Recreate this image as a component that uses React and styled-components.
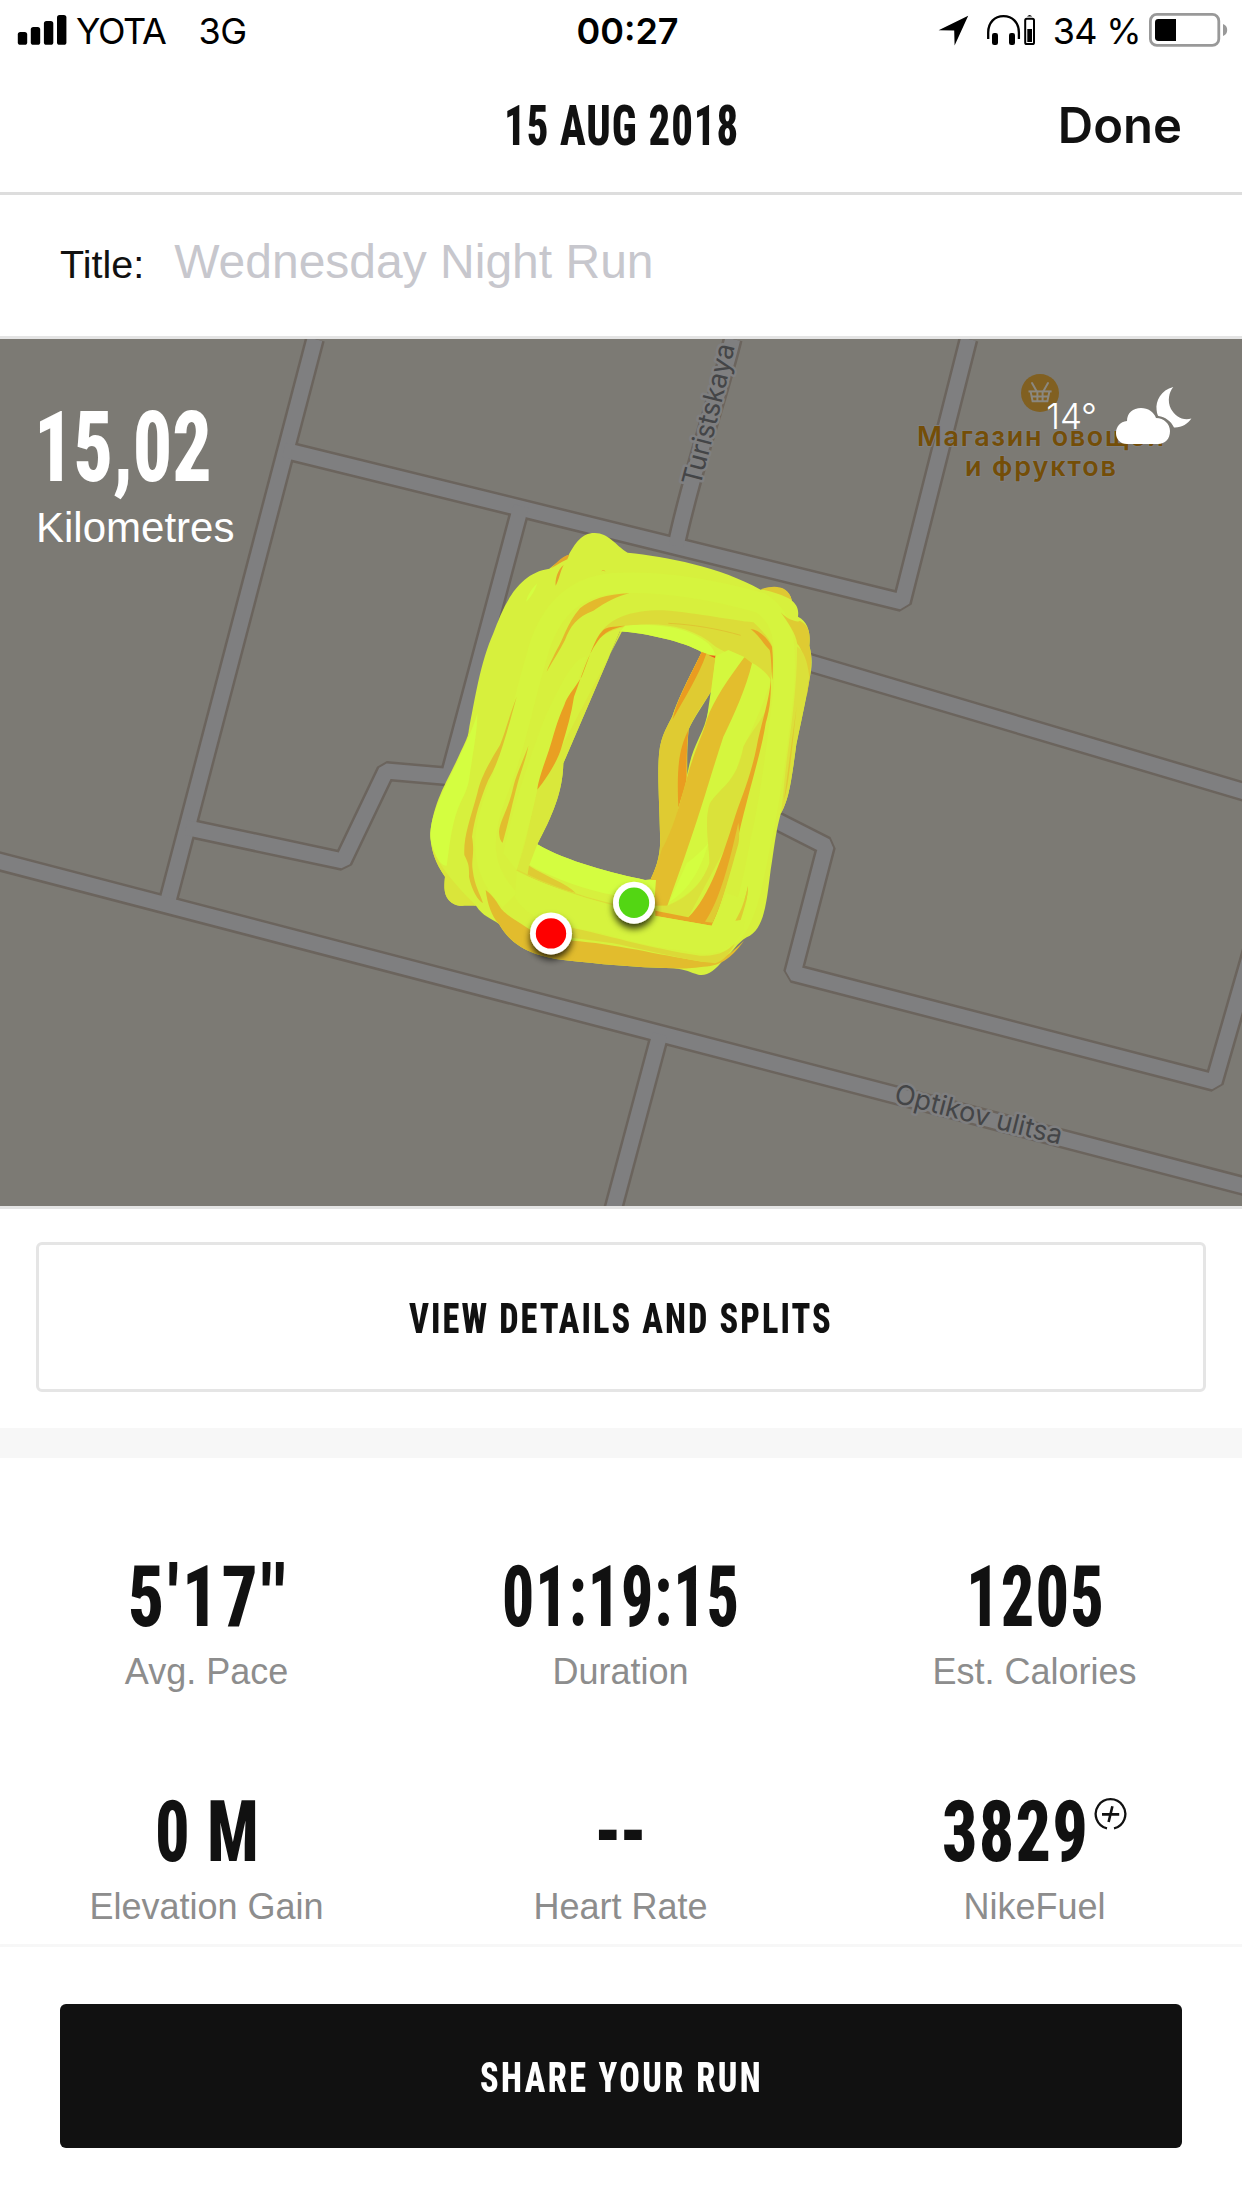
import React, { useLayoutEffect, useRef, useState } from "react";
import styled, { createGlobalStyle } from "styled-components";

const GlobalStyle = createGlobalStyle`
  *, *::before, *::after { box-sizing: border-box; }
  body {
    margin: 0;
    background: #fff;
    color: #111;
    font-family: "Liberation Sans", Arial, sans-serif;
  }
`;

const system = `Inter, "Open Sans", sans-serif`;

const Screen = styled.main`
  width: 1242px;
  height: 2208px;
  display: flex;
  flex-direction: column;
  background: #fff;
  overflow: hidden;
`;

/* ---------- condensed headline text ---------- */

const CondensedBox = styled.span`
  display: inline-flex;
  flex: none;
  justify-content: flex-start;
  width: ${(p) => p.$width}px;
  height: ${(p) => p.$line}px;
  line-height: ${(p) => p.$line}px;
`;

const CondensedInner = styled.span`
  flex: none;
  white-space: pre;
  transform-origin: 0 50%;
  font-family: Roboto, "Open Sans", sans-serif;
  font-stretch: 75%;
  font-weight: ${(p) => p.$weight};
  font-size: ${(p) => p.$size}px;
  letter-spacing: ${(p) => p.$spacing}px;
  margin-right: ${(p) => -p.$spacing}px;
`;

function Condensed({ children, width, size, line, weight = 800, spacing = 0 }) {
  const ref = useRef(null);
  const [scale, setScale] = useState(0.8);
  useLayoutEffect(() => {
    setScale(width / (ref.current.offsetWidth - spacing));
  }, [width, spacing, children]);
  return (
    <CondensedBox $width={width} $line={line}>
      <CondensedInner
        ref={ref}
        $size={size}
        $weight={weight}
        $spacing={spacing}
        style={{ transform: `scaleX(${scale})` }}
      >
        {children}
      </CondensedInner>
    </CondensedBox>
  );
}

/* ---------- status bar ---------- */

const StatusBar = styled.header`
  flex: none;
  height: 62px;
  display: grid;
  grid-template-columns: 1fr auto 1fr;
  padding: 0 14px 0 17px;
  font: 400 36px/62px ${system};
  color: #000;
`;

const StatusSide = styled.div`
  display: flex;
  align-items: flex-start;
  justify-content: ${(p) => (p.$end ? "flex-end" : "flex-start")};
`;

const StatusText = styled.span`
  white-space: pre;
  margin-left: ${(p) => p.$before || 0}px;
  letter-spacing: ${(p) => p.$spacing || 0}px;
`;

const Clock = styled.time`
  font-weight: 600;
  margin-left: 10px;
`;

const StatusIcon = styled.svg`
  display: block;
  flex: none;
  height: 62px;
  width: ${(p) => p.$width}px;
  margin-left: ${(p) => p.$before || 0}px;
`;

const SignalIcon = () => (
  <StatusIcon $width={50} viewBox="17 0 50 62">
    <rect x="17.8" y="32" width="9.4" height="12.8" rx="2.6" />
    <rect x="30.8" y="27" width="9.4" height="17.8" rx="2.6" />
    <rect x="43.9" y="21" width="9.4" height="23.8" rx="2.6" />
    <rect x="57" y="15" width="9.4" height="29.8" rx="2.6" />
  </StatusIcon>
);

const LocationIcon = () => (
  <StatusIcon $width={31} viewBox="939 0 31 62">
    <path d="M939.6 30.2 969.2 15.8 955.6 45.6 955.2 30.6Z" />
  </StatusIcon>
);

const HeadphonesIcon = () => (
  <StatusIcon $width={50} $before={17} viewBox="986 0 50 62">
    <path
      d="M988.2 39V32.5C988.2 22.5 994.5 16.2 1003.5 16.2S1018.9 22.5 1018.9 32.5V39"
      fill="none"
      stroke="#000"
      strokeWidth="2.3"
    />
    <rect x="992" y="33" width="6" height="12" rx="2.2" />
    <rect x="1009" y="33" width="6" height="12" rx="2.2" />
    <rect x="1025.2" y="18.8" width="8.8" height="25.2" rx="1.6" fill="none" stroke="#000" strokeWidth="2" />
    <rect x="1027.3" y="29" width="4.7" height="13" />
    <path d="M1027 16.6Q1029.6 13.6 1032.2 16.6Z" />
  </StatusIcon>
);

const BatteryIcon = () => (
  <StatusIcon $width={79} $before={8} viewBox="1149 0 79 62">
    <rect x="1150.4" y="14.4" width="68.4" height="31" rx="6.5" fill="none" stroke="#999" strokeWidth="2.8" />
    <path d="M1176 19V41H1158.4Q1155 41 1155 37.6V22.4Q1155 19 1158.4 19Z" />
    <path d="M1223 24Q1227.2 25.5 1227.2 30T1223 36Z" fill="#999" />
  </StatusIcon>
);

/* ---------- navigation + title ---------- */

const NavBar = styled.nav`
  flex: none;
  height: 133px;
  display: grid;
  grid-template-columns: 1fr auto 1fr;
  align-items: start;
  padding: 34px 60px 0;
  border-bottom: 3px solid #ddd;
`;

const DoneButton = styled.button`
  grid-column: 3;
  justify-self: end;
  padding: 0;
  border: 0;
  background: none;
  color: #111;
  font: 600 49px/60px ${system};
`;

const NavTitle = styled.h1`
  grid-column: 2;
  margin: 0;
  display: flex;
`;

const TitleRow = styled.label`
  flex: none;
  height: 144px;
  display: flex;
  align-items: baseline;
  gap: 30px;
  padding: 39px 60px 0;
  border-bottom: 3px solid #e4e4e4;
`;

const TitleLabel = styled.span`
  font-size: 39.5px;
  line-height: 56px;
`;

const TitleValue = styled.span`
  font-size: 48px;
  line-height: 56px;
  color: #c7c7cd;
`;

/* ---------- map ---------- */

const MapPanel = styled.section`
  flex: none;
  position: relative;
  height: 870px;
  border-bottom: 3px solid #e4e4e4;
  background: #7c7a74;
`;

const MapCanvas = styled.svg`
  position: absolute;
  inset: 0;
  width: 1242px;
  height: 867px;
  font-family: ${system};
`;

const MapOverlay = styled.div`
  position: relative;
  display: flex;
  justify-content: space-between;
  align-items: flex-start;
  padding: 48px 50px 0 34px;
  color: #fff;
`;

const Distance = styled.div`
  display: flex;
  flex-direction: column;
  gap: 6px;
  padding-top: 10px;
`;

const Unit = styled.span`
  font-size: 42px;
  line-height: 50px;
  padding-left: 2px;
`;

const Weather = styled.div`
  display: flex;
  align-items: center;
  gap: 18px;
  font: 350 35px/40px ${system};
`;

const WeatherIcon = styled.svg`
  display: block;
  width: 77px;
  height: 57px;
`;

const roads = [
  "M315 339 166 908",
  "M284 450 902 602 968.5 339",
  "M732.7 339C722 385 692 470 676 546",
  "M521 506 449 776.5 386 771 343 861 186 827.5",
  "M-8 859.5 621 1023.5 1250 1187.5",
  "M660 1034 609 1225",
  "M780 654 1260 796.5",
  "M765 815 826 846 793 973 1214 1082 1252 950",
];

const Roads = () => (
  <g fill="none" strokeLinejoin="bevel">
    {roads.map((d) => (
      <path key={d} d={d} stroke="#6b645d" strokeWidth="20" />
    ))}
    {roads.map((d) => (
      <path key={d} d={d} stroke="#7f7f80" strokeWidth="15" />
    ))}
  </g>
);

const Shop = () => (
  <g>
    <circle cx="1040" cy="393" r="19" fill="#816021" />
    <g fill="none" stroke="#8b8880" strokeWidth="2">
      <path d="M1032 383 1036.5 391M1048 383 1043.5 391" strokeLinecap="round" />
      <path d="M1028.5 391.4H1051.6" />
      <path d="M1030.6 391.4 1032.6 401.2H1047.4L1049.4 391.4M1032 396.4H1048.4M1037.4 391.4V401M1042.6 391.4V401" />
    </g>
    <g
      fill="#744e08"
      stroke="#7f7f80"
      strokeWidth="2"
      paintOrder="stroke"
      fontWeight="600"
      fontSize="27"
      textAnchor="middle"
    >
      <text x="1040.5" y="446" textLength="247">Магазин овощей</text>
      <text x="1040.5" y="476" textLength="151">и фруктов</text>
    </g>
  </g>
);

const StreetNames = () => (
  <g fill="#444547" stroke="#7f7f80" strokeWidth="5" strokeLinejoin="round" paintOrder="stroke" fontSize="27">
    <path id="tur" d="M700 487C711 445 726 388 740 322" fill="none" stroke="none" />
    <path id="opt" d="M893 1102C950 1117 1010 1133 1070 1147" fill="none" stroke="none" />
    <text>
      <textPath href="#tur">Turistskaya</textPath>
    </text>
    <text>
      <textPath href="#opt">Optikov ulitsa</textPath>
    </text>
  </g>
);

const Route = () => (
  <g transform="translate(400 500) scale(0.33333)">
    <path
      fill="#d7f03d"
      fillRule="evenodd"
      d="M583 99C625 98 645 135 683 158C800 170 960 200 1082 269C1120 258 1165 256 1176 302C1195 318 1196 335 1194 350C1225 365 1232 400 1228 437C1240 480 1234 510 1230 530C1215 620 1195 700 1188 740C1172 860 1165 900 1142 942C1126 1000 1122 1050 1112 1110C1100 1200 1095 1290 1040 1312C1010 1330 1000 1355 970 1380C945 1412 920 1430 895 1424C870 1418 860 1408 820 1405C700 1402 600 1392 490 1380C420 1370 340 1350 297 1272C270 1252 250 1250 228 1217C190 1215 175 1222 155 1208C130 1190 132 1160 135 1130C105 1090 90 1040 91 1000C100 900 150 830 180 760C210 700 203 705 210 670C225 600 240 490 280 400C310 320 350 220 448 206C470 190 490 170 506 165C525 130 545 99 583 99Z
      M660 394L490 790C488 880 455 950 412 1033C500 1085 640 1120 735 1140L752 1138C780 1080 782 1040 780 1000C778 900 770 800 780 740C790 690 815 660 820 640C845 570 890 490 905 456C850 425 740 400 660 394Z
      M933 573C920 600 880 655 866 688C860 750 862 800 862 825C875 740 905 710 918 660C930 620 934 600 933 573Z"
    />
    <path fill="#d4fe40" d="M232 640C215 700 190 740 170 790C120 890 91 950 91 1010C95 1050 120 1100 140 1097C150 1030 155 960 185 900C212 850 208 820 213 800C222 740 232 690 232 640Z" />
    <path fill="#dae53a" d="M94 1030C105 1080 150 1140 228 1217C190 1215 175 1222 155 1208C130 1190 132 1160 135 1130C115 1100 100 1075 94 1030Z" />
    <path fill="#d4fd40" d="M412 250C395 265 380 290 379 305C395 290 405 270 412 250Z" />
    <path
      fill="none"
      stroke="#d6f43e"
      strokeWidth="62"
      d="M330 1200C240 1110 240 1010 290 880C350 730 370 600 410 470C440 350 510 260 640 250C800 240 960 275 1080 308C1150 350 1160 420 1152 560C1130 760 1110 900 1085 1010C1060 1130 1040 1300 960 1325C820 1330 680 1290 540 1250"
    />
    <path fill="#d9e83b" d="M675 377L660 394 490 790C488 880 455 950 412 1033L383 1130 350 1110C390 1000 395 920 412 869C440 835 475 780 485 740Z" />
    <path fill="#d6f33e" d="M412 868C400 930 375 1020 350 1110L310 1060C330 960 370 820 440 640C480 560 520 470 560 470Z" />
    <path fill="#dcdc38" d="M585 430C615 350 700 330 790 331C900 340 1000 362 1060 367C1090 395 1112 420 1117 440L1112 540C1080 505 1000 470 947 440C890 390 820 372 740 373C690 375 620 385 585 430Z" />
    <path fill="#d4fd40" d="M660 394L675 377C740 370 820 378 870 398C920 420 942 440 947 470L905 456C850 425 740 400 660 394Z" />
    <path fill="none" stroke="#dfc030" strokeWidth="2.5" d="M805 370C880 373 960 388 1022 406" />
    <path fill="#e8a626" d="M1052 387C1080 390 1105 418 1116 440C1120 475 1119 500 1117 540C1113 510 1115 475 1109 450C1090 430 1075 405 1052 387Z" />
    <path fill="#e0c030" d="M350 590C330 640 315 700 300 735C260 800 240 840 232 880C210 960 190 1010 193 1065C205 1090 208 1095 207 1130C215 1170 235 1203 249 1209C240 1180 224 1160 218 1110C213 1080 225 1060 216 1010C225 950 240 900 265 840C300 780 320 700 350 590Z" />
    <path fill="#e4b92c" d="M688 280C620 282 570 300 540 325C500 370 490 420 470 450C455 480 445 500 440 515C460 480 480 450 495 420C510 380 530 350 580 332C620 305 650 290 688 280Z" />
    <path fill="#e2bd2d" d="M385 738C370 780 350 820 340 860C325 930 300 960 297 995C298 1015 303 1025 308 1028C322 980 335 920 353 850C367 800 380 770 385 738Z" />
    <path fill="#e99f22" d="M675 377C640 380 620 380 610 390C580 420 570 470 545 530C520 570 500 590 493 615C470 665 460 710 447 750C430 800 415 840 412 869C440 835 475 780 485 740C500 690 515 640 522 590C545 530 560 470 592 425C612 395 640 385 675 377Z" />
    <path fill="#e5a52a" d="M452 205C475 183 490 166 508 164L502 178C485 186 470 196 452 205ZM491 195C472 210 465 240 467 257C479 235 480 215 491 195ZM604 214Q610 207 617 215Q610 210 604 214Z" />
    <path fill="#dfcb32" d="M1142 337C1165 362 1195 368 1200 362C1228 375 1232 405 1228 437C1240 480 1230 530 1220 590C1222 520 1212 450 1192 432C1187 400 1165 370 1142 337Z" />
    <path fill="#dbe03a" d="M1191 440C1193 560 1168 720 1158 800C1150 870 1146 930 1142 942C1165 900 1172 860 1188 740C1195 700 1215 620 1228 530C1222 480 1210 450 1191 440Z" />
    <path fill="#dfc832" d="M1190 620C1175 720 1165 810 1152 900C1168 850 1178 720 1190 620ZM1082 268C1120 255 1165 255 1175 300C1150 286 1120 276 1082 268Z" />
    <path fill="#dfcb32" d="M905 456L947 470 935 573C900 625 880 655 866 688C850 750 836 800 835 850L835 920 800 1217H762L752 1138C780 1080 782 1040 780 1000C778 900 770 800 780 740C790 690 815 660 820 640C845 570 890 490 905 456Z" />
    <path fill="#ea9c20" d="M905 456C870 530 830 600 818 658C850 600 895 530 919 461ZM866 688C836 750 830 800 835 924C845 890 860 850 860 830C860 780 860 740 866 688Z" />
    <path fill="#ee5a1c" d="M926 466L947 467 945 474Z" />
    <path fill="#d4f83e" d="M947 468L985 450 1035 472C990 540 940 610 920 660C926 620 930 590 933 573Z" />
    <path fill="#d5f63e" d="M1055 488C1040 560 1000 650 970 710C930 830 900 950 800 1217C850 1195 905 1160 928 1090C930 1050 910 960 930 910C960 865 1005 850 1012 800C1030 730 1080 650 1113 540C1100 520 1080 500 1055 488Z" />
    <path fill="#d4fe40" d="M925 1030C905 1100 870 1170 808 1206L860 1090Q900 1060 925 1030Z" />
    <path fill="#e3be2d" d="M1033 472L1056 490C1040 560 1000 650 970 710C930 830 900 950 802 1217H768L752 1138C780 1080 785 1040 790 1040C830 960 835 920 862 830C880 760 910 700 920 660C940 600 990 530 1033 472Z" />
    <path fill="#dae23a" d="M1030 740C1010 850 960 860 930 910C910 960 930 1050 928 1090C905 1160 850 1200 802 1217H768L760 1235 865 1252C930 1130 1000 1000 1020 960C1050 820 1100 680 1112 600C1095 650 1050 700 1030 740Z" />
    <path fill="#e8a626" d="M1113 530C1110 600 1080 680 1070 740C1050 840 1020 900 1002 960C970 1060 930 1190 865 1252L766 1232V1248L935 1277C980 1180 1000 1060 1017 1000C1050 860 1085 750 1097 670C1112 620 1113 580 1113 530Z" />
    <path fill="#dfcb32" d="M1015 968C1019 1000 1018 1020 1015 1032C990 1120 970 1200 938 1268L915 1265C960 1200 990 1080 1015 968ZM1044 1158C1035 1200 1025 1230 1006 1262L1022 1260C1035 1220 1044 1190 1044 1158Z" />
    <path fill="#d4fd40" d="M412 1033C500 1085 640 1120 735 1140H768L762 1217 640 1185C560 1170 470 1140 388 1095Z" />
    <path fill="#dfcb32" d="M387 1097C440 1130 500 1150 527 1179C470 1165 420 1145 382 1127Z" />
    <path fill="none" stroke="#dbdd38" strokeWidth="4" d="M350 1110C430 1150 540 1190 640 1214" />
    <path fill="#d6f33e" d="M350 1114C430 1155 540 1190 640 1218L765 1247 935 1277 980 1180 1040 1200 1030 1290C980 1370 920 1370 850 1352L520 1282C430 1275 360 1230 345 1190Z" />
    <path fill="#dfcb32" d="M1044 1158C1035 1200 1025 1230 1006 1262L1022 1260C1035 1220 1044 1190 1044 1158Z" />
    <path fill="#e2bc2d" d="M257 1170C285 1190 300 1225 307 1230C330 1255 380 1280 400 1296L515 1322C640 1330 780 1365 890 1382C950 1395 990 1365 1032 1322C1000 1365 970 1398 910 1400C850 1408 820 1405 820 1405C700 1402 600 1392 490 1380C420 1370 340 1350 297 1272C275 1250 262 1210 257 1170Z" />
    <path fill="#dcd937" d="M515 1283C600 1300 750 1345 900 1367C960 1370 985 1350 1005 1330C990 1360 970 1385 945 1390C880 1385 780 1360 640 1330L515 1313Z" />
  </g>
);

const Marker = ({ x, y, color }) => (
  <g>
    <circle cx={x} cy={y} r="21" fill="#fff" filter="url(#pinShadow)" />
    <circle cx={x} cy={y} r="15.2" fill={color} />
  </g>
);

const RunMap = () => (
  <MapCanvas viewBox="0 339 1242 867">
    <defs>
      <filter id="pinShadow" x="-50%" y="-50%" width="200%" height="200%">
        <feDropShadow dx="0" dy="5" stdDeviation="3.5" floodColor="#000" floodOpacity="0.75" />
      </filter>
    </defs>
    <Roads />
    <StreetNames />
    <Shop />
    <Route />
    <Marker x={634} y={902.7} color="#53d613" />
    <Marker x={551} y={933.4} color="#fe0000" />
  </MapCanvas>
);

/* ---------- details ---------- */

const DetailsSection = styled.section`
  flex: none;
  padding: 33px 36px 36px;
  border-bottom: 30px solid #f7f7f7;
`;

const OutlineButton = styled.button`
  width: 100%;
  height: 150px;
  display: flex;
  align-items: center;
  justify-content: center;
  padding: 1px 3px 0 0;
  border: 3px solid #e5e5e5;
  border-radius: 6px;
  background: #fff;
  color: #111;
`;

const Stats = styled.section`
  flex: none;
  height: 489px;
  display: grid;
  grid-template-columns: repeat(3, 1fr);
  align-content: start;
  row-gap: 95px;
  padding-top: 96px;
  border-bottom: 3px solid #f7f7f7;
`;

const Stat = styled.div`
  display: flex;
  flex-direction: column;
  align-items: center;
  gap: 10px;
`;

const StatValue = styled.div`
  display: flex;
  align-items: flex-start;
  gap: 5px;
  padding-right: 1px;
`;

const StatLabel = styled.div`
  font-size: 36px;
  line-height: 44px;
  padding-right: 1px;
  color: #8d8d8d;
`;

const FuelIcon = styled.svg`
  display: block;
  width: 34px;
  height: 34px;
  margin-top: 8px;
`;

const stats = [
  { label: "Avg. Pace", value: "5'17''", width: 157, spacing: 4 },
  { label: "Duration", value: "01:19:15", width: 237, spacing: 1.5 },
  { label: "Est. Calories", value: "1205", width: 138, spacing: 1.5 },
  { label: "Elevation Gain", value: "0 M", width: 104, spacing: 1 },
  { label: "Heart Rate", value: "--", width: 53, spacing: -3 },
  { label: "NikeFuel", value: "3829", width: 146, spacing: 1.5, fuel: true },
];

const Footer = styled.footer`
  padding: 57px 60px 0;
`;

const ShareButton = styled.button`
  width: 100%;
  height: 144px;
  display: flex;
  align-items: center;
  justify-content: center;
  padding: 1px 2px 0 0;
  border: 0;
  border-radius: 6px;
  background: #111;
  color: #fff;
`;

export default function App() {
  return (
    <Screen>
      <GlobalStyle />
      <StatusBar>
        <StatusSide>
          <SignalIcon />
          <StatusText $before={9} $spacing={-1.3}>YOTA</StatusText>
          <StatusText $before={33} $spacing={-0.5}>3G</StatusText>
        </StatusSide>
        <Clock>00:27</Clock>
        <StatusSide $end>
          <LocationIcon />
          <HeadphonesIcon />
          <StatusText $before={17} $spacing={-0.7}>34 %</StatusText>
          <BatteryIcon />
        </StatusSide>
      </StatusBar>

      <NavBar>
        <NavTitle>
          <Condensed width={234} size={56} line={60} spacing={1.2}>15 AUG 2018</Condensed>
        </NavTitle>
        <DoneButton>Done</DoneButton>
      </NavBar>

      <TitleRow>
        <TitleLabel>Title:</TitleLabel>
        <TitleValue>Wednesday Night Run</TitleValue>
      </TitleRow>

      <MapPanel>
        <RunMap />
        <MapOverlay>
          <Distance>
            <Condensed width={178} size={99} line={100} weight={800} spacing={0}>15,02</Condensed>
            <Unit>Kilometres</Unit>
          </Distance>
          <Weather>
            <span>14°</span>
            <WeatherIcon viewBox="1115 387 77 57">
              <g fill="#fff">
                <path d="M1173.3 387C1161 390 1155.5 401 1156.6 410C1157 414 1158 416 1158.5 416C1165 417 1171 421 1174 427.5C1181 428 1188 424 1191.4 418.6C1182 421 1175 416 1171 409C1167 401 1169 392 1173.3 387Z" />
                <path d="M1127 444C1120 444 1116 439 1116 433C1116 427 1120 421.5 1127 421C1127 413 1133 408 1141 408C1148 408 1154 412 1156 418C1164 418 1170 424 1170 431C1170 439 1165 444 1158 444Z" />
              </g>
            </WeatherIcon>
          </Weather>
        </MapOverlay>
      </MapPanel>

      <DetailsSection>
        <OutlineButton>
          <Condensed width={422} size={43} line={60} spacing={2.6}>VIEW DETAILS AND SPLITS</Condensed>
        </OutlineButton>
      </DetailsSection>

      <Stats>
        {stats.map((s) => (
          <Stat key={s.label}>
            <StatValue>
              <Condensed width={s.width} size={86} line={86} spacing={s.spacing}>
                {s.value}
              </Condensed>
              {s.fuel && (
                <FuelIcon viewBox="1092 1797 34 34">
                  <g fill="none" stroke="#111" strokeWidth="2.3">
                    <path d="M1106 1828.4A14.8 14.8 0 1 1 1113 1828.4" />
                    <path d="M1101 1814.4H1118.2M1111.4 1806.2 1107.6 1822" strokeWidth="2.6" />
                  </g>
                </FuelIcon>
              )}
            </StatValue>
            <StatLabel>{s.label}</StatLabel>
          </Stat>
        ))}
      </Stats>

      <Footer>
        <ShareButton>
          <Condensed width={281} size={43} line={60} spacing={3}>SHARE YOUR RUN</Condensed>
        </ShareButton>
      </Footer>
    </Screen>
  );
}
